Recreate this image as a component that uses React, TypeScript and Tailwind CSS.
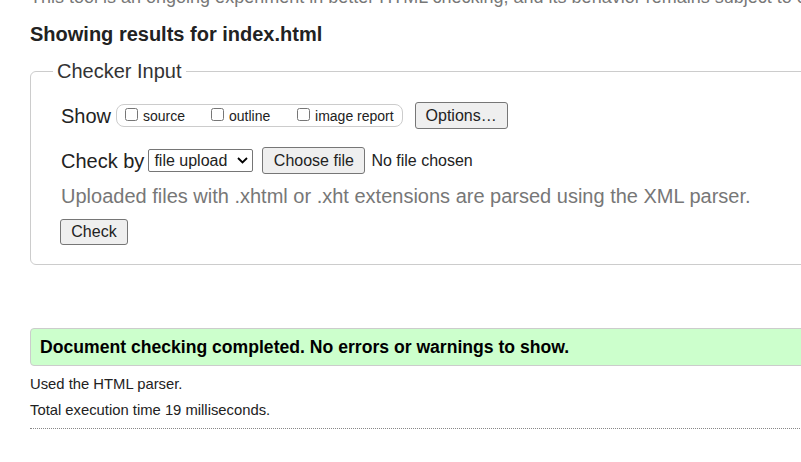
export default function App() {
  const shows = [
    { id: "source", label: "source", w: "w-[86px]" },
    { id: "outline", label: "outline", w: "w-[86px]" },
    { id: "image", label: "image report", w: "" },
  ];

  return (
    <div className="w-[801px] h-[462px] overflow-hidden bg-white text-[#222] font-['Liberation_Sans',Arial,sans-serif]">
      <div className="pl-[30px] w-[1000px]">
        {/* intro, scrolled mostly out of view */}
        <p className="text-[18px] leading-[22px] text-[#777] mt-[-14px] whitespace-nowrap">
          This tool is an ongoing experiment in better HTML checking, and its behavior remains subject to change
        </p>

        <h2 className="text-[20px] font-bold leading-[23px] mt-[15px]">Showing results for index.html</h2>

        {/* Checker Input */}
        <fieldset className="mt-[14px] w-[900px] border border-[#ccc] rounded-md pl-[30px] pb-[19px]">
          <legend className="ml-[-8px] px-[4px] text-[20px] leading-[23px] text-[#333]">Checker Input</legend>

          <div className="flex items-center mt-[19px] h-[27px]">
            <span className="text-[20px] mr-[5px]">Show</span>
            <div className="flex items-center h-[23px] border border-[#ccc] rounded-[8px] pl-[8px] pr-[8px]">
              {shows.map((s) => (
                <label key={s.id} className={`flex items-center gap-[5px] text-[14px] ${s.w}`}>
                  <input type="checkbox" className="w-[13px] h-[13px] mb-[3px]" />
                  <span className="mt-[1px]">{s.label}</span>
                </label>
              ))}
            </div>
            <button className="ml-[12px] h-[27px] w-[93px] bg-[#efefef] border border-[#767676] rounded-[3px] text-[16px]">
              Options…
            </button>
          </div>

          <div className="flex items-center mt-[18px] h-[27px]">
            <span className="text-[20px] mr-[4px]">Check by</span>
            <div className="flex items-center h-[23px] w-[105px] border border-[#767676] rounded-[2px] pl-[5px] pr-[4px] text-[16px]">
              <span className="flex-1">file upload</span>
              <svg width="11" height="7" viewBox="0 0 11 7">
                <path d="M1 1l4.5 4.5L10 1" fill="none" stroke="#000" strokeWidth="1.8" />
              </svg>
            </div>
            <button className="ml-[9px] h-[27px] w-[103px] bg-[#efefef] border border-[#767676] rounded-[3px] text-[16px]">
              Choose file
            </button>
            <span className="ml-[6px] text-[16px]">No file chosen</span>
          </div>

          <p className="mt-[11px] text-[20px] leading-[23px] text-[#777]">
            Uploaded files with .xhtml or .xht extensions are parsed using the XML parser.
          </p>

          <button className="mt-[11px] ml-[-1px] h-[26px] w-[68px] bg-[#efefef] border border-[#767676] rounded-[3px] text-[16px]">
            Check
          </button>
        </fieldset>

        {/* Results */}
        <div className="mt-[63px] w-[900px] h-[38px] flex items-center pl-[9px] bg-[#ccffcc] border border-[#ccc] rounded-[4px]">
          <p className="text-[17.6px] font-bold text-black">Document checking completed. No errors or warnings to show.</p>
        </div>

        <p className="mt-[9px] text-[14.8px] leading-[18px]">Used the HTML parser.</p>
        <p className="mt-[8px] text-[14.8px] leading-[18px]">Total execution time 19 milliseconds.</p>
        <div className="mt-[9px] w-[900px] border-t border-dotted border-[#888]" />
      </div>
    </div>
  );
}
